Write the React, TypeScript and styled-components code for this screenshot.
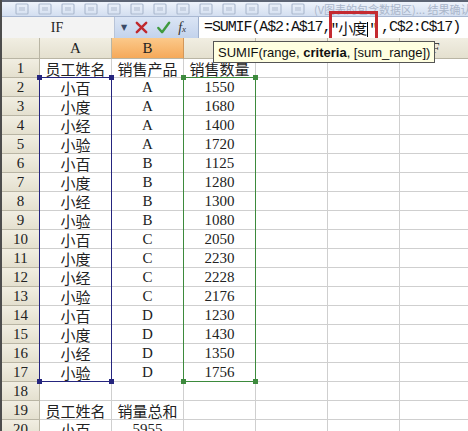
import React from "react";
import styled, { createGlobalStyle } from "styled-components";

const GlobalStyle = createGlobalStyle`
  html, body {
    margin: 0;
    padding: 0;
    background: #ffffff;
    overflow: hidden;
  }
`;

const COLS = ["A", "B", "C", "D", "E", "F"];
// header labels hidden under the function tooltip
const HIDDEN_HEADS = ["C", "D", "E"];
const ROW_H = 19;
const HEAD_H = 21;
const ROWHEAD_W = 40;
const COL_W = 72;

const rows: string[][] = [
  ["员工姓名", "销售产品", "销售数量"],
  ["小百", "A", "1550"],
  ["小度", "A", "1680"],
  ["小经", "A", "1400"],
  ["小验", "A", "1720"],
  ["小百", "B", "1125"],
  ["小度", "B", "1280"],
  ["小经", "B", "1300"],
  ["小验", "B", "1080"],
  ["小百", "C", "2050"],
  ["小度", "C", "2230"],
  ["小经", "C", "2228"],
  ["小验", "C", "2176"],
  ["小百", "D", "1230"],
  ["小度", "D", "1430"],
  ["小经", "D", "1350"],
  ["小验", "D", "1756"],
  [],
  ["员工姓名", "销量总和"],
  ["小百", "5955"],
];

function App() {
  return (
    <Page>
      <GlobalStyle />
      <Toolbar>
        <Grip />
        {[0, 1, 2, 3, 4, 5, 6, 7, 8, 9, 10, 11, 12].map((i) => (
          <ToolIcon key={i} viewBox="0 0 14 12">
            <rect x="1" y="1" width="12" height="10" rx="1" fill="none" stroke="#aebbd0" strokeWidth="1.2" />
            <rect x="4" y="4" width="6" height="4" fill="#c8d2e2" />
          </ToolIcon>
        ))}
        <ToolText>(V图表的包含数据区)... 结果确认</ToolText>
      </Toolbar>

      <FormulaBar>
        <NameBox>IF</NameBox>
        <FxButtons>
          <DropArrow>▼</DropArrow>
          <FxIcon viewBox="0 0 16 16">
            <path d="M3 3 L13 13 M13 3 L3 13" stroke="#c0282d" strokeWidth="2.6" strokeLinecap="round" />
          </FxIcon>
          <FxIcon viewBox="0 0 16 16">
            <path d="M2.5 8.5 L6.5 13 L14 3" stroke="#3f9a3f" strokeWidth="2.6" fill="none" strokeLinecap="round" strokeLinejoin="round" />
          </FxIcon>
          <FxLabel>
            <i>f</i>
            <small>x</small>
          </FxLabel>
        </FxButtons>
        <FormulaInput>
          =SUMIF(A$2:A$17,
          <Criteria>
            "小度<Caret />"
          </Criteria>
          ,C$2:C$17)
        </FormulaInput>
      </FormulaBar>

      <Sheet>
        <Corner />
        {COLS.map((c) => (
          <ColHead key={c} $active={c === "B"}>
            {HIDDEN_HEADS.includes(c) ? "" : c}
          </ColHead>
        ))}
        {rows.map((r, i) => (
          <React.Fragment key={i}>
            <RowHead>{i + 1}</RowHead>
            {COLS.map((c, j) => (
              <Cell key={c}>{r[j] ?? ""}</Cell>
            ))}
          </React.Fragment>
        ))}

        <Tooltip>
          SUMIF(range, <b>criteria</b>, [sum_range])
        </Tooltip>

        <RangeBox $color="#25257e" $col={0}>
          <Handle $color="#25257e" $x="left" $y="top" />
          <Handle $color="#25257e" $x="right" $y="top" />
          <Handle $color="#25257e" $x="left" $y="bottom" />
          <Handle $color="#25257e" $x="right" $y="bottom" />
        </RangeBox>
        <RangeBox $color="#3d8a3d" $col={2}>
          <Handle $color="#3d8a3d" $x="left" $y="top" />
          <Handle $color="#3d8a3d" $x="right" $y="top" />
          <Handle $color="#3d8a3d" $x="left" $y="bottom" />
          <Handle $color="#3d8a3d" $x="right" $y="bottom" />
        </RangeBox>
      </Sheet>
    </Page>
  );
}

const Page = styled.div`
  width: 468px;
  height: 431px;
  overflow: hidden;
  display: flex;
  flex-direction: column;
  border-left: 2px solid #4d4d4d;
  box-sizing: border-box;
  font-family: "Liberation Serif", "Noto Sans CJK SC", serif;
  color: #222;
`;

const Toolbar = styled.div`
  height: 17px;
  flex-shrink: 0;
  display: flex;
  align-items: center;
  gap: 9px;
  padding-left: 4px;
  box-sizing: border-box;
  border-top: 2px solid #5c6474;
  background: linear-gradient(#eef3fb, #d3def0);
  border-bottom: 1px solid #a9b8d2;
  overflow: hidden;
`;

const Grip = styled.div`
  width: 2px;
  height: 11px;
  background: repeating-linear-gradient(#36507a 0 2px, transparent 2px 4px);
`;

const ToolIcon = styled.svg`
  width: 14px;
  height: 12px;
  flex-shrink: 0;
`;

const ToolText = styled.span`
  font-family: "Noto Sans CJK SC", sans-serif;
  font-size: 11px;
  color: #aab6ca;
  white-space: nowrap;
`;

const FormulaBar = styled.div`
  height: 21px;
  flex-shrink: 0;
  display: flex;
  align-items: stretch;
  background: #ffffff;
  position: relative;
`;

const NameBox = styled.div`
  width: 110px;
  display: flex;
  align-items: center;
  justify-content: center;
  background: #f3f3f3;
  border-right: 1px solid #b8c4d8;
  font-size: 14px;
  padding-right: 2px;
`;

const FxButtons = styled.div`
  width: 84px;
  display: flex;
  align-items: center;
  gap: 7px;
  padding-left: 6px;
  box-sizing: border-box;
  background: linear-gradient(#dbe5f5, #c3d3ec);
  border-right: 1px solid #9fb0cc;
`;

const DropArrow = styled.span`
  font-size: 8px;
  color: #3b4a66;
  font-family: "DejaVu Sans", sans-serif;
`;

const FxIcon = styled.svg`
  width: 15px;
  height: 15px;
`;

const FxLabel = styled.span`
  font-family: "Liberation Serif", serif;
  font-size: 14px;
  color: #333;
  i {
    font-style: italic;
  }
  small {
    font-size: 9px;
    font-style: italic;
  }
`;

const FormulaInput = styled.div`
  flex: 1;
  display: flex;
  align-items: center;
  padding-left: 5px;
  font-family: "Liberation Mono", "Noto Sans CJK SC", monospace;
  font-size: 15px;
  letter-spacing: -1.1px;
  color: #111;
  white-space: pre;
`;

const Criteria = styled.span`
  position: relative;
  padding-right: 4px;
  &::after {
    content: "";
    position: absolute;
    left: -1px;
    right: 3px;
    top: -6px;
    bottom: -8px;
    border: 3px solid #c42a30;
  }
`;

const Caret = styled.span`
  display: inline-block;
  width: 1px;
  height: 15px;
  background: #000;
  vertical-align: middle;
  margin: 0 1px;
`;

const Sheet = styled.div`
  position: relative;
  display: grid;
  grid-template-columns: ${ROWHEAD_W - 2}px repeat(6, ${COL_W}px);
  grid-template-rows: ${HEAD_H}px;
  grid-auto-rows: ${ROW_H}px;
  font-size: 15px;
`;

const headBase = `
  display: flex;
  align-items: center;
  justify-content: center;
  background: linear-gradient(#f1eee2, #e4e0cf);
  border-right: 1px solid #b9b5a4;
  border-bottom: 1px solid #b9b5a4;
  box-sizing: border-box;
  color: #222;
`;

const Corner = styled.div`
  ${headBase}
`;

const ColHead = styled.div<{ $active?: boolean }>`
  ${headBase}
  ${(p) =>
    p.$active &&
    `background: linear-gradient(#fbc98a, #f5a95a); border-right-color: #d2975a;`}
`;

const RowHead = styled.div`
  ${headBase}
`;

const Cell = styled.div`
  display: flex;
  align-items: center;
  justify-content: center;
  border-right: 1px solid #cfcfcf;
  border-bottom: 1px solid #cfcfcf;
  box-sizing: border-box;
  white-space: nowrap;
  overflow: hidden;
`;

const Tooltip = styled.div`
  position: absolute;
  left: 211px;
  top: 3px;
  height: 20px;
  padding: 0 4px;
  display: flex;
  align-items: center;
  white-space: pre;
  background: #ffffe1;
  border: 1px solid #555;
  font-family: "Liberation Sans", Arial, sans-serif;
  font-size: 13px;
  color: #111;
  b {
    font-weight: 700;
  }
`;

const RangeBox = styled.div<{ $color: string; $col: number }>`
  position: absolute;
  left: ${(p) => ROWHEAD_W - 2 + p.$col * COL_W - 1}px;
  top: ${HEAD_H + ROW_H - 1}px;
  width: ${COL_W + 1}px;
  height: ${ROW_H * 16 + 1}px;
  border: 1.5px solid ${(p) => p.$color};
  box-sizing: border-box;
  pointer-events: none;
`;

const Handle = styled.div<{ $color: string; $x: "left" | "right"; $y: "top" | "bottom" }>`
  position: absolute;
  width: 5px;
  height: 5px;
  background: ${(p) => p.$color};
  ${(p) => p.$x}: -3px;
  ${(p) => p.$y}: -3px;
`;

export default App;
